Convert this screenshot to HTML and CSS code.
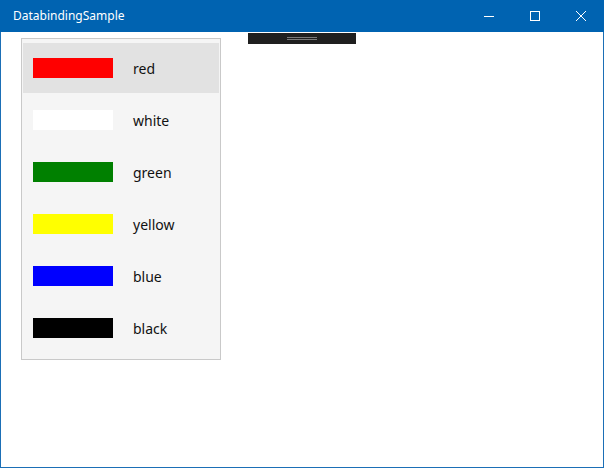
FILE: index.html
```html
<!DOCTYPE html>
<html>
<head>
<meta charset="utf-8">
<link rel="stylesheet" href="styles.css">
</head>
<body>
<div class="window">
  <div class="titlebar">
    <span class="title">DatabindingSample</span>
    <div class="controls">
      <div class="ctl"><svg width="12" height="12" viewBox="0 0 12 12"><line x1="1" y1="6.5" x2="11" y2="6.5" stroke="#fff" stroke-width="1"/></svg></div>
      <div class="ctl"><svg width="12" height="12" viewBox="0 0 12 12"><rect x="1.5" y="1.5" width="9" height="9" fill="none" stroke="#fff" stroke-width="1"/></svg></div>
      <div class="ctl"><svg width="12" height="12" viewBox="0 0 12 12"><path d="M1 1 L11 11 M11 1 L1 11" stroke="#fff" stroke-width="1"/></svg></div>
    </div>
  </div>
  <div class="content">
    <div class="toolbar"><span class="grip"></span></div>
    <div class="list">
      <div class="item selected"><span class="swatch" style="background:#ff0000"></span><span class="label">red</span></div>
      <div class="item"><span class="swatch" style="background:#ffffff"></span><span class="label">white</span></div>
      <div class="item"><span class="swatch" style="background:#008000"></span><span class="label">green</span></div>
      <div class="item"><span class="swatch" style="background:#ffff00"></span><span class="label">yellow</span></div>
      <div class="item"><span class="swatch" style="background:#0000ff"></span><span class="label">blue</span></div>
      <div class="item"><span class="swatch" style="background:#000000"></span><span class="label">black</span></div>
    </div>
  </div>
</div>
</body>
</html>
```
FILE: styles.css
```css
html, body { margin: 0; padding: 0; background: #fff; }
body { font-family: "Noto Sans", "Open Sans", sans-serif; }
.window {
  width: 604px; height: 468px; box-sizing: border-box;
  border: 1px solid #1b6fb6; border-top: none;
  display: flex; flex-direction: column;
}
.titlebar {
  height: 32px; background: #0063b1; margin: 0 -1px;
  display: flex; align-items: center; justify-content: space-between;
  color: #fff;
}
.title { font-size: 12px; padding-left: 13px; padding-bottom: 1px; }
.controls { display: flex; height: 32px; }
.ctl { width: 46px; height: 32px; display: flex; align-items: center; justify-content: center; }
.content { position: relative; flex: 1; }
.toolbar {
  position: absolute; left: 247px; top: 1px; width: 108px; height: 11px;
  background: #1f1f1f; display: flex; justify-content: center;
}
.grip {
  margin-top: 4px; width: 30px; height: 1px;
  border-top: 1px solid #7a7a7a; border-bottom: 1px solid #7a7a7a;
}
.list {
  margin: 6px 0 0 20px; width: 200px; box-sizing: border-box;
  border: 1px solid #c9c9c9; background: #f5f5f5;
  padding: 4px 1px 6px 1px;
  display: flex; flex-direction: column; gap: 2px;
}
.item {
  height: 50px; display: flex; align-items: center; padding-left: 10px;
}
.item.selected { background: #e2e2e2; }
.swatch { width: 80px; height: 20px; display: block; }
.label { margin-left: 20px; font-size: 14px; color: #111; }
```
